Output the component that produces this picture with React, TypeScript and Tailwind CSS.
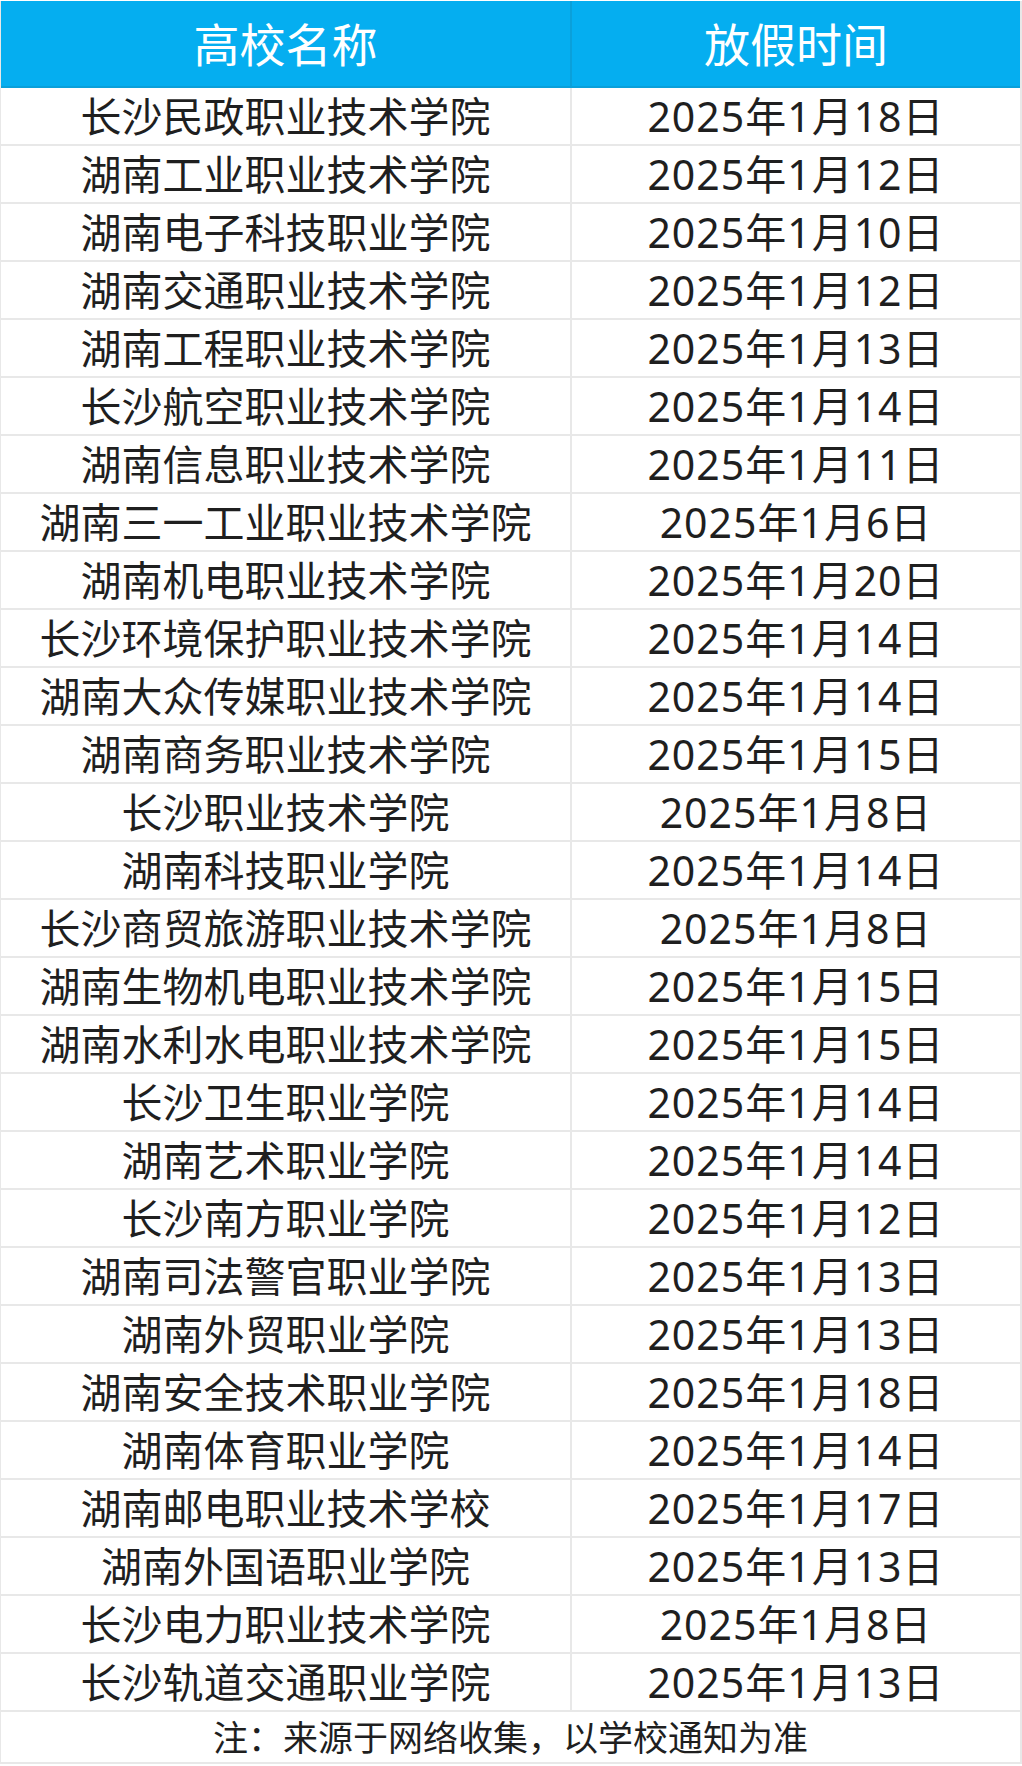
const schools: [string, string][] = [
  ["长沙民政职业技术学院", "2025年1月18日"],
  ["湖南工业职业技术学院", "2025年1月12日"],
  ["湖南电子科技职业学院", "2025年1月10日"],
  ["湖南交通职业技术学院", "2025年1月12日"],
  ["湖南工程职业技术学院", "2025年1月13日"],
  ["长沙航空职业技术学院", "2025年1月14日"],
  ["湖南信息职业技术学院", "2025年1月11日"],
  ["湖南三一工业职业技术学院", "2025年1月6日"],
  ["湖南机电职业技术学院", "2025年1月20日"],
  ["长沙环境保护职业技术学院", "2025年1月14日"],
  ["湖南大众传媒职业技术学院", "2025年1月14日"],
  ["湖南商务职业技术学院", "2025年1月15日"],
  ["长沙职业技术学院", "2025年1月8日"],
  ["湖南科技职业学院", "2025年1月14日"],
  ["长沙商贸旅游职业技术学院", "2025年1月8日"],
  ["湖南生物机电职业技术学院", "2025年1月15日"],
  ["湖南水利水电职业技术学院", "2025年1月15日"],
  ["长沙卫生职业学院", "2025年1月14日"],
  ["湖南艺术职业学院", "2025年1月14日"],
  ["长沙南方职业学院", "2025年1月12日"],
  ["湖南司法警官职业学院", "2025年1月13日"],
  ["湖南外贸职业学院", "2025年1月13日"],
  ["湖南安全技术职业学院", "2025年1月18日"],
  ["湖南体育职业学院", "2025年1月14日"],
  ["湖南邮电职业技术学校", "2025年1月17日"],
  ["湖南外国语职业学院", "2025年1月13日"],
  ["长沙电力职业技术学院", "2025年1月8日"],
  ["长沙轨道交通职业学院", "2025年1月13日"],
]

export default function App() {
  return (
    <div className="w-[1022px] h-[1766px] bg-white pt-px font-['Noto_Sans','Noto_Sans_CJK_SC',sans-serif] text-[#1f1f1f]">
      <div className="border-l border-r-2 border-[#e8e8e8]">
        {/* header */}
        <div className="flex h-[87px] bg-[#05aef0] border-b-2 border-[#0aa0da] text-white text-[46px] leading-none">
          <div className="w-[571px] border-r-2 border-[#0aa0da] flex items-center justify-center">
            高校名称
          </div>
          <div className="flex-1 flex items-center justify-center">放假时间</div>
        </div>

        {schools.map(([name, date]) => (
          <div key={name} className="flex h-[58px] border-b-2 border-[#e8e8e8] text-[41px] leading-none">
            <div className="w-[571px] border-r-2 border-[#e8e8e8] flex items-center justify-center">
              {name}
            </div>
            <div className="flex-1 flex items-center justify-center tracking-[1px]">{date}</div>
          </div>
        ))}

        <div className="flex h-[52px] items-center justify-center border-b-2 border-[#e8e8e8] text-[35px] leading-none">
          注：来源于网络收集，以学校通知为准
        </div>
      </div>
    </div>
  )
}
